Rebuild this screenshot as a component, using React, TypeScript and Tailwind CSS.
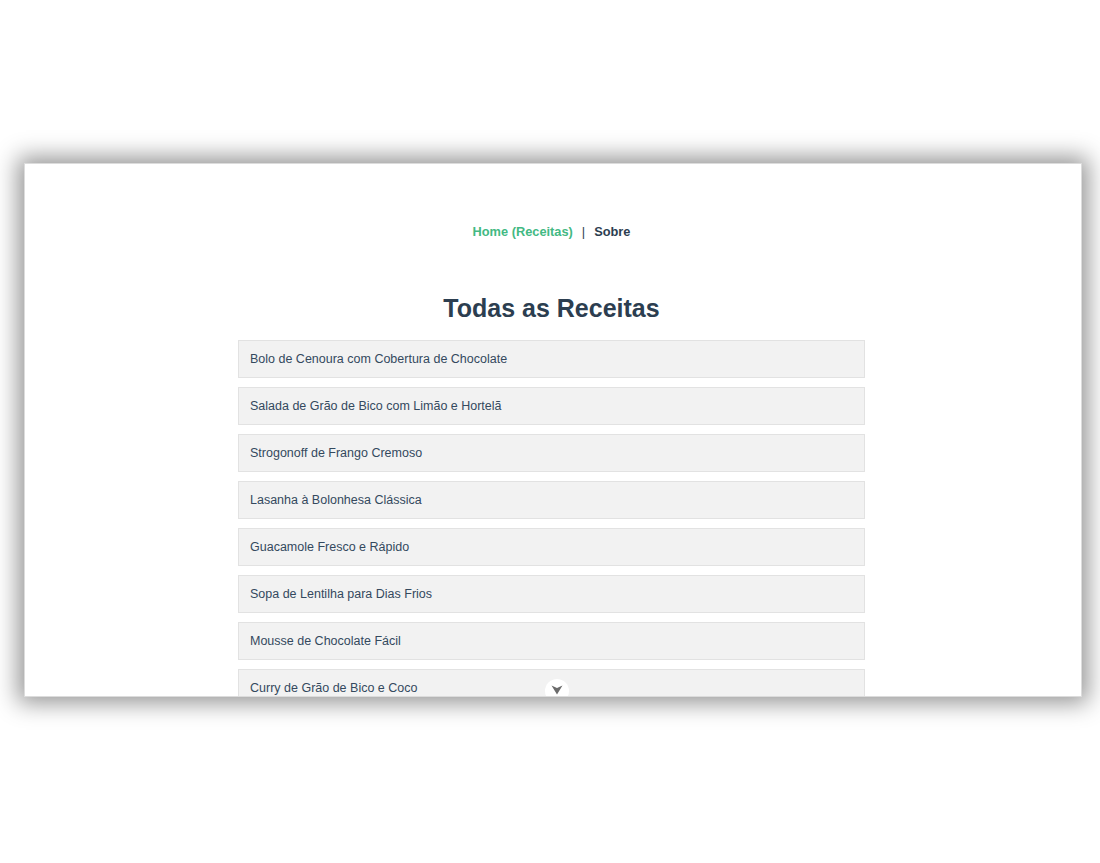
import { useState } from "react";

const recipes = [
  "Bolo de Cenoura com Cobertura de Chocolate",
  "Salada de Grão de Bico com Limão e Hortelã",
  "Strogonoff de Frango Cremoso",
  "Lasanha à Bolonhesa Clássica",
  "Guacamole Fresco e Rápido",
  "Sopa de Lentilha para Dias Frios",
  "Mousse de Chocolate Fácil",
  "Curry de Grão de Bico e Coco",
];

export default function App() {
  const [page, setPage] = useState<"home" | "about">("home");

  return (
    <div
      className="min-h-screen bg-white pt-[163px] pl-[24px]"
      style={{ fontFamily: '"Liberation Sans", Arial, sans-serif' }}
    >
      <div className="relative w-[1058px] h-[534px] overflow-hidden bg-white border border-[#dcdcdc] shadow-[0_0_22px_6px_rgba(0,0,0,0.42)]">
        <div className="flex flex-col items-center text-[#2c3e50]">
          {/* Nav */}
          <nav className="pt-[58px] flex items-center text-[12.8px] font-bold ml-[-3px]">
            <button
              onClick={() => setPage("home")}
              className={page === "home" ? "text-[#42b983]" : "text-[#2c3e50]"}
            >
              Home (Receitas)
            </button>
            <span className="mx-[9px] font-normal text-[#2c3e50]">|</span>
            <button
              onClick={() => setPage("about")}
              className={page === "about" ? "text-[#42b983]" : "text-[#2c3e50]"}
            >
              Sobre
            </button>
          </nav>

          <h1 className="mt-[53px] text-[25px] leading-[28px] font-bold ml-[-3px]">Todas as Receitas</h1>

          {/* Recipe list */}
          <ul className="mt-[18px] w-[627px] flex flex-col gap-[9px] ml-[-3px]">
            {recipes.map((r) => (
              <li
                key={r}
                className="h-[38px] flex items-center px-[11px] bg-[#f2f2f2] border border-[#e2e2e2] text-[12.5px] text-[#34495e]"
              >
                {r}
              </li>
            ))}
          </ul>
        </div>

        {/* Scroll-down button */}
        <button className="absolute left-[520px] top-[515px] w-[24px] h-[24px] rounded-full bg-white flex items-center justify-center">
          <svg width="12" height="10" viewBox="0 0 12 10" className="mb-[3px]">
            <path d="M0.5 0.5 L6 3 L11.5 0.5 L6 9.5 Z" fill="#6b6b6b" />
          </svg>
        </button>
      </div>
    </div>
  );
}
